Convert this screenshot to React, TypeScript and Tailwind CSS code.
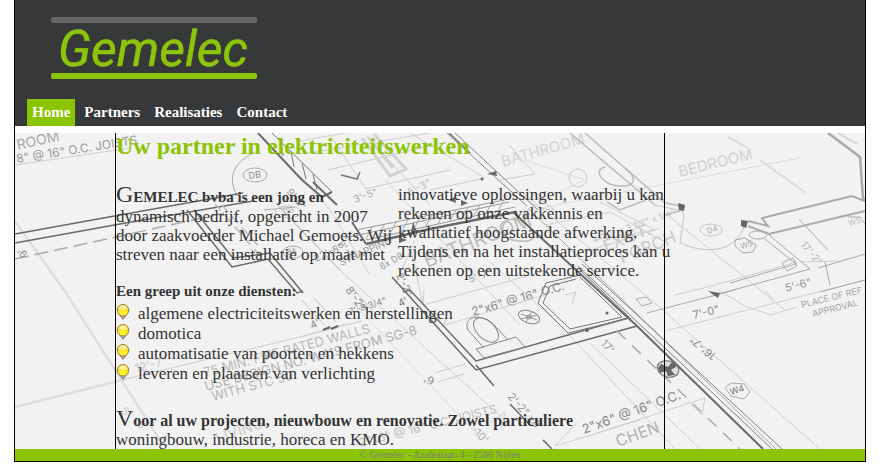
const navItems = ["Home", "Partners", "Realisaties", "Contact"];

const services = [
  "algemene electriciteitswerken en herstellingen",
  "domotica",
  "automatisatie van poorten en hekkens",
  "leveren en plaatsen van verlichting",
];

function Logo() {
  return (
    <svg width="206" height="62" viewBox="0 0 206 62" role="img" aria-label="Gemelec">
      <rect width="206" height="6" rx="2" fill="#666666" />
      <text
        x="7"
        y="49"
        fontFamily="Roboto, sans-serif"
        fontSize="50"
        fontStyle="italic"
        fontWeight="400"
        fill="#8cc40a"
        stroke="#8cc40a"
        strokeWidth="0.6"
      >
        Gemelec
      </text>
      <rect y="56" width="206" height="6" rx="2" fill="#8cc40a" />
    </svg>
  );
}

function Bulb() {
  return (
    <svg className="shrink-0" width="14" height="16" viewBox="0 0 14 16" aria-hidden="true">
      <path d="M3.5 10.5 L7 15.3 L10.5 10.5 Z" fill="#c4c4b4" stroke="#77776a" strokeWidth="1" />
      <circle cx="7" cy="6.3" r="5.8" fill="#f9dd20" stroke="#94813c" strokeWidth="1" />
      <ellipse cx="7" cy="3.8" rx="3.8" ry="2.2" fill="#fdf0a0" />
      <ellipse cx="7" cy="8.6" rx="3.4" ry="2.4" fill="#fff22c" />
    </svg>
  );
}

type Note = [text: string, x: number, y: number, angle: number, size: number, color: string];

const notes: Note[] = [
  ["ROOM", 18, 150, -13, 14, "#a8a8a8"],
  ['8" @ 16" O.C. JOISTS', 17, 163, -9, 12, "#999"],
  ["DB", 249, 179, -8, 9, "#888"],
  ["DB", 284, 215, -15, 8, "#b5b5b5"],
  ["8A", 287, 255, -10, 8, "#999"],
  ["9'", 28, 254, -130, 10, "#888"],
  ["9'-2\"", 286, 192, 50, 10, "#999"],
  ["STRAPPING", 341, 266, -24, 10, "#999"],
  ["6x DB", 382, 270, -30, 9, "#999"],
  ["BATHROOM", 427, 268, -22, 20, "#bbbbbb"],
  ["BATHROOM", 503, 167, -16, 15, "#d4d4d4"],
  ["3'-5\"", 355, 203, -20, 10, "#aaa"],
  ["5'-3\"", 410, 196, -28, 10, "#b5b5b5"],
  ["8'-2\"", 337, 245, 45, 10, "#999"],
  ["22'-8\"", 316, 262, -25, 10, "#999"],
  ["8'-2\"", 345, 290, 55, 11, "#888"],
  ["2'-2\"", 396, 275, 65, 10, "#888"],
  ["4'", 400, 307, -25, 10, "#777"],
  ["4'", 312, 329, -25, 10, "#888"],
  ["7'-8 3/4\"", 350, 315, -18, 9, "#888"],
  ["5'-7\"", 470, 283, -20, 10, "#999"],
  ["BEDROOM", 680, 177, -14, 15, "#d0d0d0"],
  ["4 1/2\" x 3 1/2\" x 1/4\"", 594, 243, -19, 9, "#c5c5c5"],
  ["EXIST.", 606, 252, -22, 16, "#c5c5c5"],
  ["PORCH", 622, 264, -22, 17, "#c8c8c8"],
  ["2\"x6\" @ 16\" O.C.", 473, 316, -16, 12, "#888"],
  ["2\"x6\" @ 16\" O.C.", 584, 434, -20, 13, "#888"],
  ["CHEN", 618, 447, -20, 16, "#b0b0b0"],
  ["2\"x6\" @ 16\" O.C. JOISTS", 360, 447, -14, 12, "#bdbdbd"],
  ["12'-7\"", 136, 373, -15, 12, "#c8c8c8"],
  ["75 MIN. FIRE RATED WALLS", 205, 377, -15, 13, "#bababa"],
  ["USE DESIGN NO. W419 FROM SG-8", 206, 391, -15, 13, "#b0b0b0"],
  ["WITH STC 50", 213, 401, -15, 13, "#b5b5b5"],
  ["LIVING", 218, 444, -20, 15, "#cccccc"],
  ["5\" x8", 120, 412, 40, 11, "#cccccc"],
  ["6'", 435, 378, 200, 11, "#888"],
  ["2'-2\" x8", 507, 397, 48, 11, "#999"],
  ["-10'", 470, 430, 45, 11, "#aaa"],
  ["PLACE OF REF", 802, 308, -14, 9, "#a5a5a5"],
  ["APPROVAL", 813, 317, -14, 9, "#a5a5a5"],
  ["5'-6\"", 786, 292, -14, 11, "#999"],
  ["7'-0\"", 694, 319, -14, 11, "#888"],
  ["16'-7\"", 717, 355, 221, 11, "#888"],
  ["17'-2\"", 800, 245, 50, 10, "#b5b5b5"],
  ["W4", 731, 395, -17, 9, "#777"],
  ["D4", 708, 234, -20, 8, "#aaa"],
  ["W5", 741, 249, -15, 8, "#aaa"],
  ["W5", 849, 226, -15, 8, "#bbb"],
  ["17'", 600, 344, 48, 11, "#999"],
];

function Blueprint() {
  return (
    <svg
      className="absolute inset-0 h-full w-full"
      viewBox="15 133 850 316"
      preserveAspectRatio="xMinYMin slice"
      aria-hidden="true"
      fill="none"
    >
      <g fontFamily="Inter, sans-serif">
        {notes.map(([text, x, y, angle, size, color], i) => (
          <text key={i} transform={`translate(${x} ${y}) rotate(${angle})`} fontSize={size} fill={color}>
            {text}
          </text>
        ))}
      </g>

      {/* faint guide lines */}
      <g stroke="#cfcfcf" strokeWidth="1">
        <path d="M15 221 L66 293 L115 370 L160 440" stroke="#d9d9de" strokeWidth="2" />
        <path d="M15 165 L130 148" />
        <path d="M15 407 L130 378" stroke="#dddddd" strokeWidth="2.5" />
        <path d="M130 378 L300 337 L345 324" />
        <path d="M300 337 L362 321 M445 325 L545 295 M435 373 L465 364 M438 382 L464 374" />
        <path d="M300 141 L345 133 M308 153 L430 133 M328 170 L447 142 M365 189 L450 170 M300 175 L330 210 L370 275" />
        <path d="M330 135 L366 189 M366 135 L430 205 M410 133 L485 178 L430 190" />
        <path d="M385 180 L520 325 M410 245 L423 305 L424 290 M415 240 L395 285 M340 270 L510 425" />
        <path d="M423 305 L513 280 L555 268 M490 262 L560 325" />
        <path d="M350 300 L480 438 M520 212 L800 158 M525 160 L585 180 L550 196" stroke="#dcdcdc" />
        <path d="M575 255 L660 228 M545 225 L610 212 L665 242 M595 240 L655 230 L600 202" />
        <path d="M520 190 L657 305 L820 449 M665 213 L785 310 M665 331 L865 280 M675 295 L715 285 L797 262" />
        <path d="M728 137 L748 148 M760 160 L806 193" stroke="#dddddd" strokeWidth="2" />
        <path d="M590 343 L700 449 M560 325 L675 449 M585 437 L705 398 L702 415 L691 404" />
        <path d="M555 446 L577 423 M555 446 L640 420 M490 423 L505 412 L502 428" />
        <path d="M745 306 L771 315 L797 307 M718 290 L745 306 M765 290 L773 300 M800 262 L840 261" />
      </g>

      {/* partition walls */}
      <g stroke="#aaaaaa" strokeWidth="1">
        <path d="M255 152 Q222 168 237 196 M264 210 L295 207 M278 206 L340 270" />
        <ellipse cx="255" cy="175" rx="12" ry="7" />
        <ellipse cx="288" cy="212" rx="13" ry="6" stroke="#c4c4c4" />
        <ellipse cx="293" cy="252" rx="10" ry="6" />
        <path d="M272 133 L332 192 L325 196 M280 139 L283 156 M291 151 L294 167 M302 163 L306 179 M313 174 L317 190" stroke="#777777" />
        <path d="M362 138 L390 176 L406 169 L374 134 M368 137 L393 168" stroke="#d2d2d2" strokeWidth="3" />
        <path d="M500 180 L535 174 L509 145 M530 192 L555 210 Q535 210 528 199" stroke="#cccccc" />
        <circle cx="578" cy="178" r="9" stroke="#c6c6c6" />
        <path d="M605 167 C592 170 603 186 620 186 C638 187 636 175 625 169" strokeWidth="1.5" stroke="#bbbbbb" />
        <path d="M570 133 L655 205 M585 133 L665 203 L685 207 M665 215 L680 211 M607 202 L620 210 L646 200" strokeWidth="1.5" stroke="#bbbbbb" />
        <path d="M655 205 L681 211 L684 215 L680 243 M744 226 C737 250 710 256 680 243" stroke="#c5c5c5" />
        <path d="M828 133 L860 157 L863 198 L865 201" strokeWidth="2.5" />
        <path d="M838 133 L857 144" strokeWidth="2" stroke="#d5d5d5" />
        <path d="M865 201 L852 196 L762 218 L768 226 L748 221 M865 211 L769 234 L748 226" strokeWidth="2" />
        <path d="M769 235 L810 269 L715 295 M765 239 L796 264 L730 283 M799 219 L828 250 M782 263 L793 258 L797 266 L787 271 Z" />
        <path d="M818 268 L865 254 M825 262 L830 285 M865 280 L820 292 M647 313 L735 290" />
        <ellipse cx="711" cy="230" rx="11" ry="6" stroke="#c5c5c5" />
        <path d="M735 240 L745 238 L756 245 L753 252 L743 253 L735 246 Z M848 217 L860 217 L865 224 M725 388 L731 383 L744 384 L750 392 L744 399 L731 396 Z" />
        <ellipse cx="758" cy="235" rx="9" ry="4" />
        <path d="M507 220 Q496 232 512 240 Q532 244 534 236 Q530 222 514 219 Z" stroke="#bbbbbb" strokeWidth="1.5" />
        <path d="M302 300 L325 326 M314 298 L336 322 M354 290 L374 312 M448 310 L444 325" stroke="#c5c5c5" />
        <path d="M323 330 L330 327 M331 329 L338 326" stroke="#666666" strokeWidth="2" />
      </g>

      {/* main walls */}
      <g stroke="#6a6a6a" strokeWidth="1.5">
        <path d="M15 234 L120 215 L243 193 M15 243 L120 224 L253 201" />
        <path d="M15 259 L230 212" stroke="#aaaaaa" strokeDasharray="14 6" />
        <path d="M215 204 L262 258 M222 205 L262 250" stroke="#bbbbbb" strokeDasharray="9 6" />
        <path d="M187 210 L232 267 L268 259 L297 293 L303 291 M194 210 L233 258 L270 253 L303 293" />
        <path d="M258 133 L302 180 L322 197 L332 192 M313 182 L337 205" strokeWidth="2" />
        <path d="M352 222 L366 244" strokeWidth="2" />
        <path d="M366 244 L430 229 L515 212" strokeWidth="2.5" />
        <path d="M345 238 L509 202 M366 240 L515 207 M356 230 L509 199" stroke="#999" strokeWidth="1" />
        <path d="M372 227 L366 239 M384 225 L378 237 M396 222 L390 234 M408 220 L402 231 M420 217 L414 229 M432 215 L426 226 M444 212 L438 224 M456 210 L450 221 M468 207 L462 219 M480 205 L474 216 M492 202 L486 214 M504 200 L498 211" stroke="#aaaaaa" strokeWidth="1" />
        <path d="M447 133 L527 206 M455 133 L538 210" stroke="#888" strokeWidth="1" />
        <path d="M392 277 L476 370 L637 326 M403 292 L410 290 L476 361 L628 318" />
        <path d="M513 212 L637 326 L763 449" strokeWidth="2" />
        <path d="M528 208 L776 449" stroke="#aaaaaa" strokeWidth="1" />
        <path d="M582 264 L782 449 M578 266 L772 449" stroke="#808080" strokeWidth="1" />
        <path d="M617 331 L740 449" stroke="#aaaaaa" strokeDasharray="12 9" />
        <path d="M476 365 L494 386 M510 404 L530 425 M543 440 L552 449" strokeWidth="1.5" />
        <path d="M580 275 L546 283 L538 303 L568 333 L630 318 L582 272 M576 279 L550 286 L543 303 L570 329 L622 317 L580 277" stroke="#777" strokeWidth="1" />
        <path d="M565 295 L576 292 L572 304" stroke="#cccccc" strokeWidth="1" />
        <path d="M476 349 L484 358 L525 347 L516 337 Z M484 348 L468 330 C462 315 483 313 494 325 L508 340" stroke="#888" strokeWidth="1" />
        <ellipse cx="486" cy="330" rx="15" ry="9" transform="rotate(44 486 330)" stroke="#888" strokeWidth="1" />
        <ellipse cx="529" cy="317" rx="11" ry="6" transform="rotate(18 529 317)" stroke="#888" strokeWidth="1" />
        <ellipse cx="529" cy="317" rx="3" ry="2" stroke="#999" strokeWidth="1" />
        <path d="M521 314 L537 320 M526 322 L532 311 M521 319 L537 315" stroke="#999" strokeWidth="1" />
        <path d="M636 299 L646 297 L652 303 L642 306 Z" stroke="#aaa" strokeWidth="1" />
      </g>
      <g fill="#666666">
        <path d="M448 200 L455 197 L456 203 Z M461 200 L468 203 L461 206 Z M487 174 L496 171 L497 176 Z M413 222 L417 232 L411 232 Z M399 237 L407 240 L399 243 Z M708 291 L720 293 L718 298 Z M741 220 L748 221 L746 228 L741 226 Z M678 203 L685 205 L684 211 L679 210 Z" />
        <ellipse cx="668" cy="369" rx="11" ry="8" transform="rotate(15 668 369)" stroke="#666666" fill="#dddddd" />
        <path d="M661 364 L668 367 L672 362 L677 366 L671 370 L675 375 L668 376 L666 371 L660 373 L658 368 Z" />
        <circle cx="607" cy="313" r="1.5" />
        <circle cx="587" cy="330" r="2" />
        <circle cx="482" cy="179" r="1.5" />
      </g>
      <path d="M341 175 L357 179 L360 172 M449 133 L470 153" stroke="#777777" strokeWidth="1.5" />
    </svg>
  );
}

export default function App() {
  return (
    <div className="bg-white pr-[19px] pl-[14px] font-['Liberation_Serif',serif] text-[17px] leading-[19px] text-[#333333]">
      <div className="border-x border-b border-black">
        <header className="bg-[#373839] pt-[17px]">
          <a href="#home" className="ml-9 block w-[206px]">
            <Logo />
          </a>
          <nav className="mt-5 ml-3 flex gap-1 text-[15px] font-bold text-white">
            {navItems.map((item, i) => (
              <a
                key={item}
                href={`#${item.toLowerCase()}`}
                className={i === 0 ? "bg-[#8bc400] px-[5px] py-1" : "px-[5px] py-1"}
              >
                {item}
              </a>
            ))}
          </nav>
        </header>

        <main className="relative mt-[7px] bg-[#f2f2f2]">
          <Blueprint />
          <div className="relative mr-[200px] ml-[100px] border-x border-black whitespace-nowrap">
            <h1 className="text-[24px] leading-[27px] font-bold text-[#8bc400]">
              Uw partner in elektriciteitswerken
            </h1>
            <div className="mt-[25px] grid grid-cols-2 gap-4">
              <p className="pt-[3px] first-letter:text-[24px] first-letter:leading-[0] first-letter:font-normal first-line:text-[15px] first-line:font-bold">
                GEMELEC bvba is een jong en
                <br />
                dynamisch bedrijf, opgericht in 2007
                <br />
                door zaakvoerder Michael Gemoets. Wij
                <br />
                streven naar een installatie op maat met
              </p>
              <p>
                innovatieve oplossingen, waarbij u kan
                <br />
                rekenen op onze vakkennis en
                <br />
                kwalitatief hoogstaande afwerking.
                <br />
                Tijdens en na het installatieproces kan u
                <br />
                rekenen op een uitstekende service.
              </p>
            </div>
            <h2 className="mt-[2px] text-[15px] font-bold">Een greep uit onze diensten:</h2>
            <ul className="mt-[3px] leading-5">
              {services.map((service) => (
                <li key={service} className="flex gap-2">
                  <Bulb />
                  {service}
                </li>
              ))}
            </ul>
            <p className="mt-[27px] first-letter:text-[24px] first-letter:leading-[0] first-letter:font-normal first-line:text-[16px] first-line:font-bold">
              Voor al uw projecten, nieuwbouw en renovatie. Zowel particuliere
              <br />
              woningbouw, industrie, horeca en KMO.
            </p>
          </div>
        </main>

        <footer className="bg-[#8bc400] text-center text-[10px] leading-3 text-[#808080]">
          © Gemelec - Azalealaan 4 - 2560 Nijlen
        </footer>
      </div>
    </div>
  );
}
